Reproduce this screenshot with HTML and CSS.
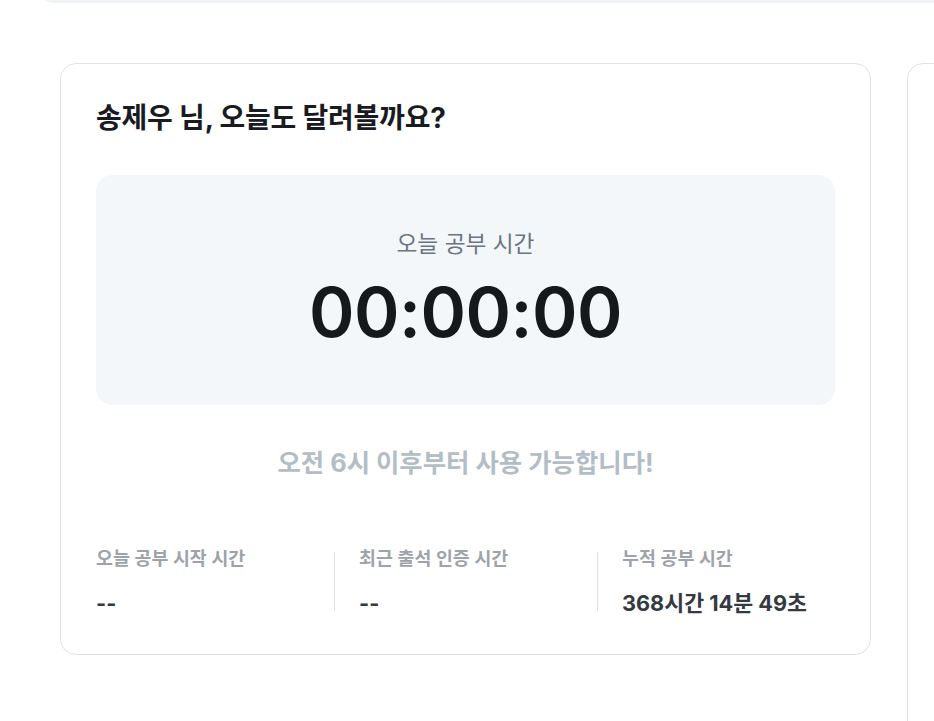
FILE: index.html
```html
<!DOCTYPE html>
<html lang="ko">
<head>
<meta charset="utf-8">
<title>오늘 공부 시간</title>
<link rel="stylesheet" href="styles.css">
</head>
<body>
<div class="topbar"></div>
<main class="row">
  <section class="card main-card">
    <h1 class="title">송제우 님, 오늘도 달려볼까요?</h1>
    <div class="timer-box">
      <div class="timer-label">오늘 공부 시간</div>
      <div class="timer-value">00:00:00</div>
    </div>
    <p class="notice">오전 6시 이후부터 사용 가능합니다!</p>
    <div class="stats">
      <div class="stat">
        <div class="stat-label">오늘 공부 시작 시간</div>
        <div class="stat-value">--</div>
      </div>
      <div class="divider"></div>
      <div class="stat">
        <div class="stat-label">최근 출석 인증 시간</div>
        <div class="stat-value">--</div>
      </div>
      <div class="divider"></div>
      <div class="stat stat-last">
        <div class="stat-label">누적 공부 시간</div>
        <div class="stat-value">368시간 14분 49초</div>
      </div>
    </div>
  </section>
  <section class="card side-card"></section>
</main>
</body>
</html>
```
FILE: styles.css
```css
* { box-sizing: border-box; }
html, body {
  margin: 0;
  padding: 0;
  background: #ffffff;
  overflow: hidden;
  height: 721px;
}
body {
  font-family: Inter, "Noto Sans CJK KR", "Noto Sans", sans-serif;
  color: #191f28;
}
.topbar {
  margin-left: 37px;
  margin-top: -17px;
  height: 20px;
  background: #eef3f6;
  border-bottom-left-radius: 16px;
}
.row {
  display: flex;
  align-items: flex-start;
  gap: 36px;
  padding: 60px 0 0 60px;
  width: 1400px;
}
.card {
  background: #fff;
  border: 1px solid #dde3e8;
  border-radius: 16px;
  flex: none;
}
.main-card {
  width: 811px;
  padding: 37px 35px 37px;
}
.side-card {
  width: 400px;
  height: 800px;
}
.title {
  margin: 0;
  font-size: 28px;
  line-height: 34px;
  font-weight: 700;
  color: #191b1f;
  letter-spacing: -0.2px;
}
.timer-box {
  margin-top: 40px;
  background: #f4f7f9;
  border-radius: 16px;
  height: 230px;
  padding-top: 54px;
  text-align: center;
}
.timer-label {
  font-size: 22.7px;
  line-height: 30px;
  color: #6b7480;
  font-weight: 400;
}
.timer-value {
  margin-top: 13px;
  font-size: 69px;
  line-height: 80px;
  font-weight: 600;
  color: #16181b;
  letter-spacing: -0.5px;
}
.notice {
  margin: 42px 0 0;
  text-align: center;
  font-size: 25.4px;
  line-height: 32px;
  font-weight: 700;
  color: #b3bdc5;
}
.stats {
  margin-top: 67px;
  display: flex;
}
.stat {
  width: 238px;
  flex: none;
}
.stat-last {
  flex: 1;
  width: auto;
}
.divider {
  width: 1px;
  flex: none;
  background: #dde2e6;
  margin: 6px 24px 6px 0;
}
.stat-label {
  font-size: 18.4px;
  line-height: 24px;
  font-weight: 600;
  color: #9da3a9;
}
.stat-value {
  margin-top: 19px;
  font-size: 21.7px;
  line-height: 28px;
  font-weight: 700;
  color: #343a40;
}
```
